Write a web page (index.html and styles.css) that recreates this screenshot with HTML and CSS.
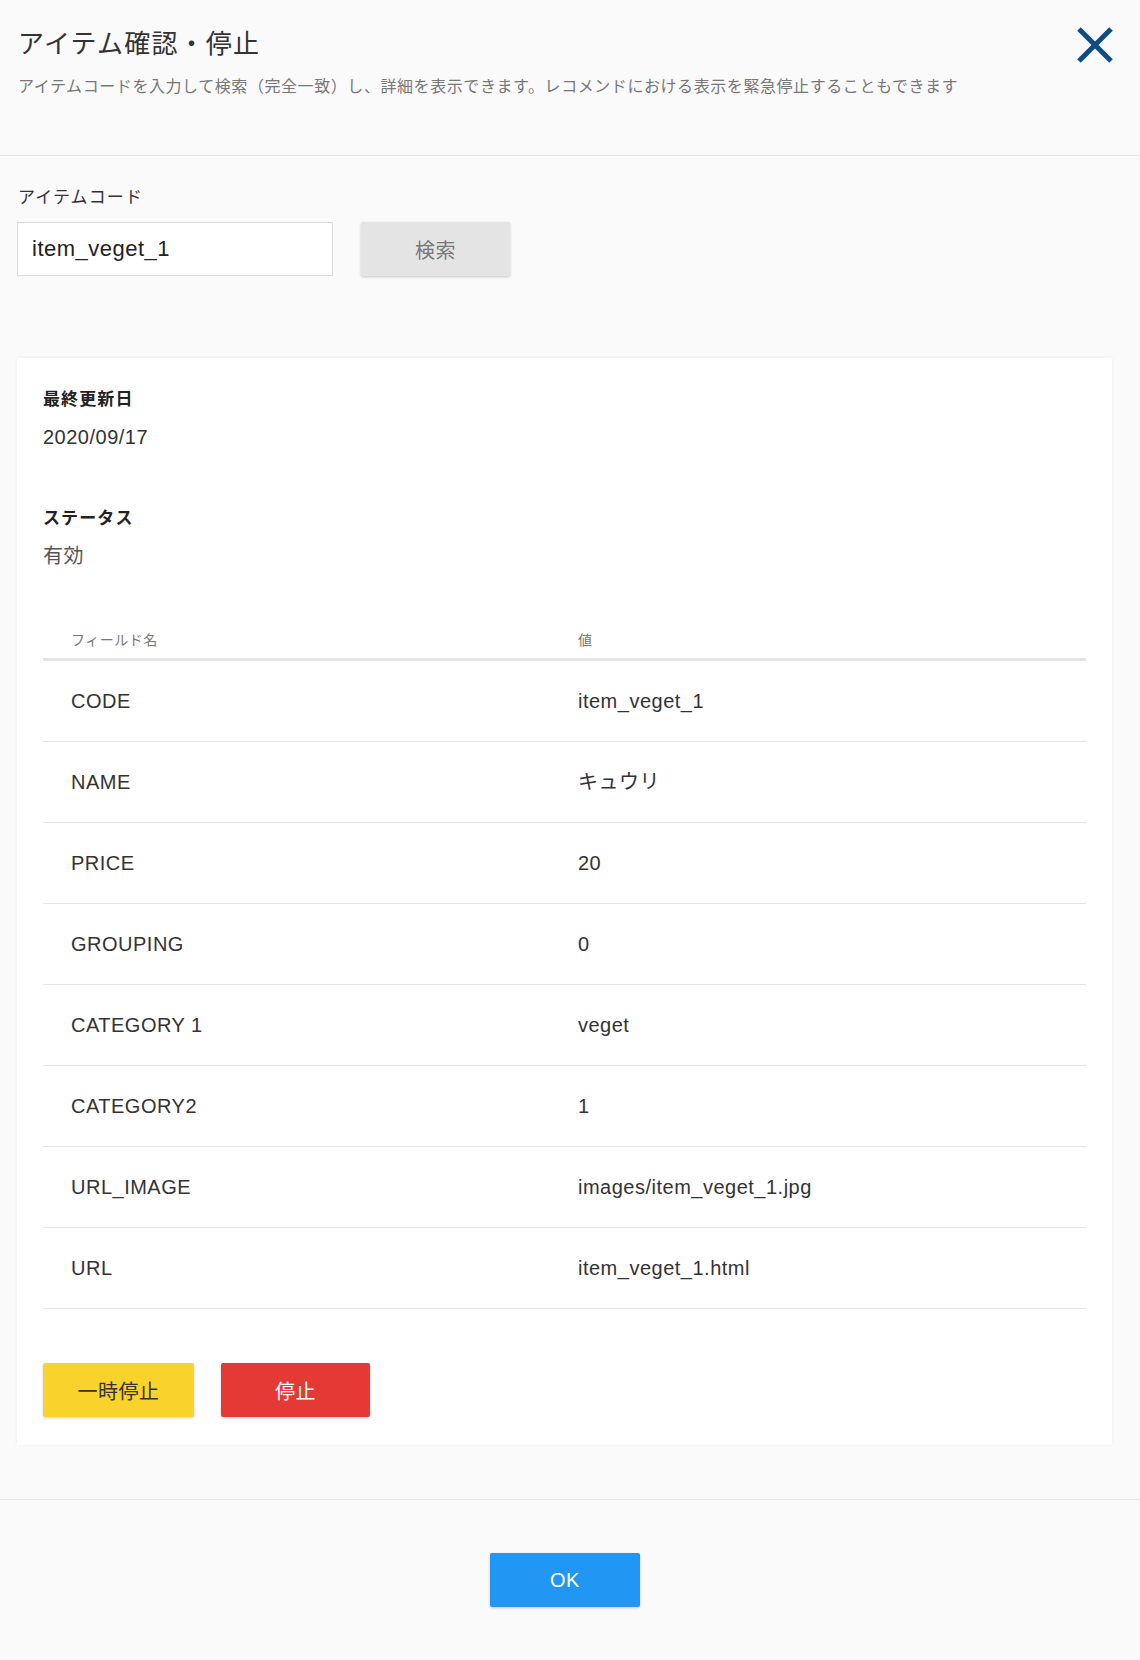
FILE: index.html
```html
<!DOCTYPE html>
<html lang="ja">
<head>
    <meta charset="UTF-8">
    <meta name="viewport" content="width=device-width, initial-scale=1.0">
    <title>アイテム確認・停止</title>
    <link rel="stylesheet" href="styles.css">
</head>
<body>
    <div class="dialog">
        <header class="dialog-header">
            <div class="heading">
                <h1>アイテム確認・停止</h1>
                <p class="lead">アイテムコードを入力して検索（完全一致）し、詳細を表示できます。レコメンドにおける表示を緊急停止することもできます</p>
            </div>
            <button type="button" class="close-btn" aria-label="閉じる">
                <svg width="36" height="36" viewBox="0 0 36 36">
                    <path d="M2 2 L34 34 M34 2 L2 34" stroke="#0e4c83" stroke-width="5" fill="none"/>
                </svg>
            </button>
        </header>

        <main class="dialog-body">
            <div class="search-form">
                <label for="itemCode">アイテムコード</label>
                <div class="search-row">
                    <input type="text" id="itemCode" value="item_veget_1">
                    <button type="button" class="btn btn-search">検索</button>
                </div>
            </div>

            <section class="item-card">
                <div class="field">
                    <div class="field-label">最終更新日</div>
                    <div class="field-value">2020/09/17</div>
                </div>
                <div class="field">
                    <div class="field-label">ステータス</div>
                    <div class="field-value status">有効</div>
                </div>

                <table class="item-table">
                    <thead>
                        <tr>
                            <th class="col-name">フィールド名</th>
                            <th>値</th>
                        </tr>
                    </thead>
                    <tbody>
                        <tr><td>CODE</td><td>item_veget_1</td></tr>
                        <tr><td>NAME</td><td>キュウリ</td></tr>
                        <tr><td>PRICE</td><td>20</td></tr>
                        <tr><td>GROUPING</td><td>0</td></tr>
                        <tr><td>CATEGORY 1</td><td>veget</td></tr>
                        <tr><td>CATEGORY2</td><td>1</td></tr>
                        <tr><td>URL_IMAGE</td><td>images/item_veget_1.jpg</td></tr>
                        <tr><td>URL</td><td>item_veget_1.html</td></tr>
                    </tbody>
                </table>

                <div class="action-row">
                    <button type="button" class="btn btn-pause">一時停止</button>
                    <button type="button" class="btn btn-stop">停止</button>
                </div>
            </section>
        </main>

        <footer class="dialog-footer">
            <button type="button" class="btn btn-ok">OK</button>
        </footer>
    </div>
</body>
</html>
```

FILE: styles.css
```css
body {
    margin: 0;
    background-color: #fafafa;
    font-family: "Liberation Sans", "Noto Sans CJK JP", sans-serif;
    color: #333;
    letter-spacing: 0.5px;
}
.dialog {
    min-height: 1660px;
    display: flex;
    flex-direction: column;
}
.dialog-header {
    display: flex;
    justify-content: space-between;
    align-items: flex-start;
    padding: 24px 27px 56px 18px;
    border-bottom: 1px solid #e6e6e6;
}
h1 {
    margin: 0;
    font-size: 26px;
    line-height: 40px;
    font-weight: normal;
    letter-spacing: 1.2px;
    color: #333;
}
.lead {
    margin: 11px 0 0;
    font-size: 16px;
    line-height: 24px;
    letter-spacing: 0.57px;
    color: #777;
}
.close-btn {
    margin-top: 3px;
    padding: 0;
    border: none;
    background: none;
    cursor: pointer;
    width: 36px;
    height: 36px;
}
.close-btn svg {
    display: block;
}
.dialog-body {
    padding: 0 28px 0 17px;
}
.search-form {
    padding-top: 30px;
}
.search-form label {
    display: block;
    font-size: 17px;
    line-height: 24px;
    letter-spacing: 1.1px;
    color: #333;
    margin: 0 0 12px 1px;
}
.search-row {
    display: flex;
    gap: 28px;
}
.search-row input {
    width: 316px;
    height: 54px;
    box-sizing: border-box;
    padding: 0 14px;
    border: 1px solid #dcdcdc;
    background: white;
    font-family: "Liberation Sans", "Noto Sans CJK JP", sans-serif;
    font-size: 22px;
    letter-spacing: 0.5px;
    color: #222;
    outline: none;
}
.btn {
    height: 54px;
    width: 150px;
    border: none;
    border-radius: 2px;
    font-family: "Liberation Sans", "Noto Sans CJK JP", sans-serif;
    font-size: 20px;
    letter-spacing: 0.5px;
    cursor: pointer;
    box-shadow: 0 1px 3px rgba(0,0,0,0.2);
}
.btn-search {
    width: 149px;
    background-color: #e4e4e4;
    color: #777;
}
.item-card {
    margin: 82px 0 54px;
    padding: 30px 26px 28px;
    background-color: white;
    box-shadow: 0 0 4px rgba(0,0,0,0.06);
}
.field + .field {
    margin-top: 56px;
}
.field-label {
    font-size: 17px;
    line-height: 24px;
    font-weight: bold;
    letter-spacing: 1.1px;
    color: #222;
}
.field-value {
    margin-top: 11px;
    font-size: 20px;
    line-height: 28px;
    color: #333;
}
.field-value.status {
    color: #555;
}
.item-table {
    width: 100%;
    margin-top: 52px;
    border-collapse: separate;
    border-spacing: 0;
}
.item-table th {
    text-align: left;
    font-weight: normal;
    font-size: 14px;
    line-height: 20px;
    color: #777;
    padding: 8px 28px;
    border-bottom: 3px solid #e4e4e4;
}
.item-table th.col-name {
    width: 451px;
}
.item-table td {
    height: 80px;
    padding: 0 28px;
    font-size: 20px;
    line-height: 24px;
    color: #333;
    border-bottom: 1px solid #e4e4e4;
    vertical-align: middle;
}
.action-row {
    display: flex;
    gap: 27px;
    margin-top: 54px;
}
.btn-pause {
    width: 151px;
    background-color: #fad22c;
    color: #333;
}
.btn-stop {
    width: 149px;
    background-color: #e53935;
    color: white;
}
.dialog-footer {
    flex: 1;
    display: flex;
    justify-content: center;
    align-items: flex-start;
    padding: 53px 10px 0 0;
    border-top: 1px solid #e4e4e4;
}
.btn-ok {
    background-color: #2196f3;
    color: white;
}
```
